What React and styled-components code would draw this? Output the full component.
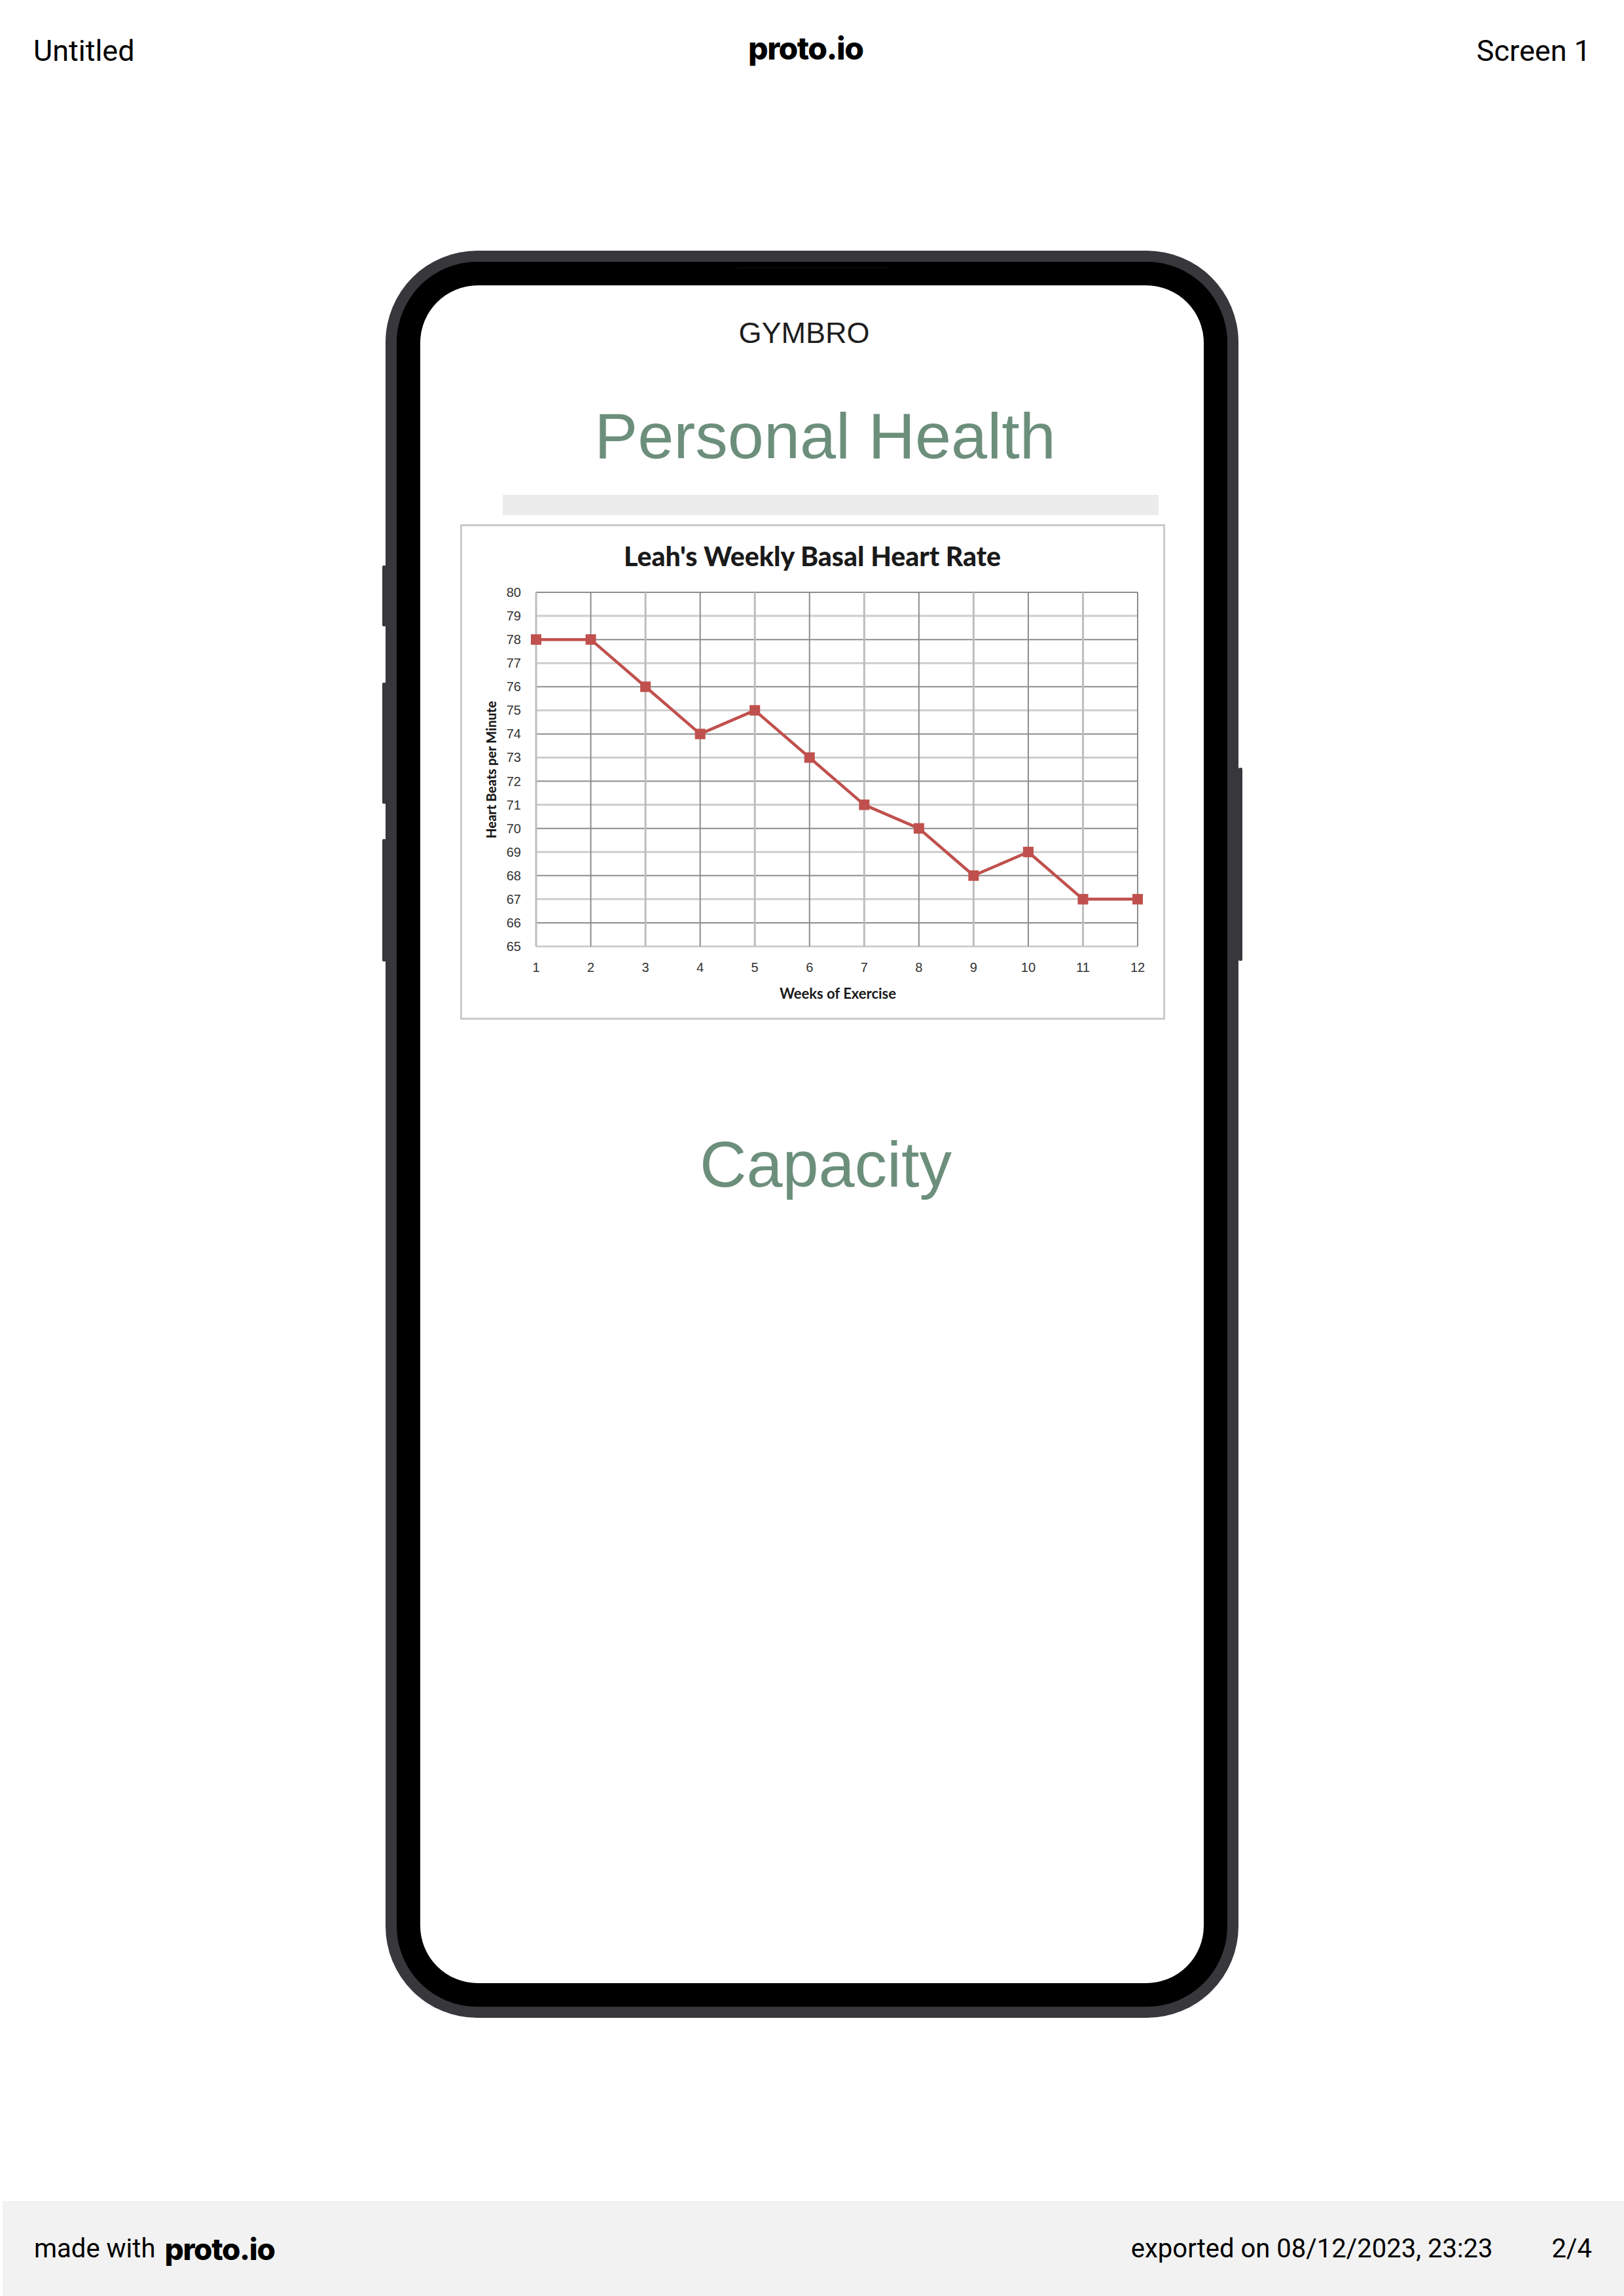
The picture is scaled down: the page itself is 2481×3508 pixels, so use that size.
import React from 'react'
import styled, { createGlobalStyle } from 'styled-components'

const GlobalStyle = createGlobalStyle`
  html, body {
    margin: 0;
    padding: 0;
    background: #fff;
  }
  * {
    box-sizing: border-box;
  }
`

const Page = styled.div`
  width: 2481px;
  min-height: 3508px;
  display: flex;
  flex-direction: column;
  font-family: Roboto, 'Liberation Sans', sans-serif;
  color: #000;
`

const TopBar = styled.header`
  height: 154px;
  padding: 0 51px;
  display: flex;
  align-items: center;
  justify-content: space-between;
  font-size: 45px;
  line-height: 1;
`

const Logo = styled.span`
  font-family: Inter, 'Open Sans', sans-serif;
  font-weight: 800;
  font-size: ${(p) => p.size}px;
  letter-spacing: -0.03em;
  line-height: 1;
  margin-top: ${(p) => p.lift || 0}px;
`

const Stage = styled.main`
  flex: 1;
  display: flex;
  justify-content: center;
  padding-top: 229px;
`

const Phone = styled.div`
  position: relative;
  width: 1303px;
  height: 2700px;
  padding: 17px;
  background: #38373c;
  border-radius: 140px;
`

const SideButton = styled.span`
  position: absolute;
  top: ${(p) => p.top}px;
  height: ${(p) => p.h}px;
  width: 6px;
  background: #38373c;
  border-radius: 2px;
  ${(p) => (p.right ? 'right: -6px;' : 'left: -5px;')}
`

const Bezel = styled.div`
  position: relative;
  height: 100%;
  padding: 36px;
  background: #000;
  border-radius: 123px;
`

const Speaker = styled.span`
  position: absolute;
  top: 8px;
  left: 50%;
  width: 231px;
  height: 2px;
  margin-left: -115px;
  background: #0b0b0b;
  border-radius: 2px;
`

const Screen = styled.div`
  height: 100%;
  background: #fff;
  border-radius: 88px;
  padding-top: 50px;
  display: flex;
  flex-direction: column;
  font-family: 'Liberation Sans', Arial, sans-serif;
  overflow: hidden;
`

const AppName = styled.div`
  font-size: 45px;
  line-height: 1;
  color: #1e1e1e;
  text-align: center;
  padding-right: 24px;
`

const Heading = styled.h1`
  margin: ${(p) => p.top}px 0 0;
  padding-left: ${(p) => p.shift}px;
  font-size: 99px;
  font-weight: 400;
  line-height: 1;
  color: #6c8f7c;
  text-align: center;
`

const GreyStrip = styled.div`
  margin: 41px 0 0 126px;
  width: 1002px;
  height: 31px;
  background: #ececec;
`

const ChartFrame = styled.div`
  margin: 14px 0 0 61px;
  width: 1077px;
  height: 757px;
  border: 3px solid #cacaca;
  background: #fff;
`

const BottomBar = styled.footer`
  height: 145px;
  margin-left: 4px;
  padding: 0 49px 0 48px;
  background: #f2f2f2;
  display: flex;
  align-items: center;
  font-size: 40px;
  line-height: 1;
`

const Made = styled.div`
  display: flex;
  align-items: center;
  gap: 14px;
  flex: 1;
`

const Exported = styled.span`
  margin-right: 90px;
`

const data = [78, 78, 76, 74, 75, 73, 71, 70, 68, 69, 67, 67]

const HeartChart = () => {
  const left = 113
  const right = 1032
  const top = 101
  const bottom = 642
  const xs = (right - left) / 11
  const ys = (bottom - top) / 15
  const pts = data.map((v, i) => [left + i * xs, bottom - (v - 65) * ys])
  const rows = Array.from({ length: 16 }, (_, i) => 65 + i)
  const cols = Array.from({ length: 12 }, (_, i) => i)
  const label = {
    fontFamily: "'Liberation Sans Narrow', 'Liberation Sans', sans-serif",
    fontSize: 20,
    fill: '#333',
  }
  const bold = {
    fontFamily: "Lato, 'Liberation Sans', sans-serif",
    fontWeight: 900,
    fill: '#1a1a1a',
  }

  return (
    <svg width="1071" height="751" viewBox="0 0 1071 751">
      <text x="535" y="61" textAnchor="middle" style={{ ...bold, fontSize: 41 }}>
        Leah's Weekly Basal Heart Rate
      </text>
      {rows.map((v) => {
        const y = bottom - (v - 65) * ys
        const even = v % 2 === 0
        return (
          <g key={v}>
            <line
              x1={left}
              x2={right}
              y1={y}
              y2={y}
              stroke={even ? '#8c8c8c' : '#cdcdcd'}
              strokeWidth={even ? 2 : 3}
            />
            <text x="90" y={y + 7} textAnchor="end" style={label}>
              {v}
            </text>
          </g>
        )
      })}
      {cols.map((i) => {
        const x = left + i * xs
        const dark = i % 2 === 1
        return (
          <g key={i}>
            <line
              x1={x}
              x2={x}
              y1={top}
              y2={bottom}
              stroke={dark ? '#8c8c8c' : '#bdbdbd'}
              strokeWidth={dark ? 2 : 3}
            />
            <text x={x} y="681" textAnchor="middle" style={label}>
              {i + 1}
            </text>
          </g>
        )
      })}
      <polyline
        points={pts.map((p) => p.join(',')).join(' ')}
        fill="none"
        stroke="#c0504d"
        strokeWidth="4.5"
        strokeLinejoin="round"
      />
      {pts.map(([x, y], i) => (
        <rect key={i} x={x - 8} y={y - 8} width="16" height="16" fill="#c0504d" />
      ))}
      <text x="574" y="722" textAnchor="middle" style={{ ...bold, fontWeight: 700, fontSize: 22 }}>
        Weeks of Exercise
      </text>
      <text
        x="0"
        y="0"
        textAnchor="middle"
        transform="translate(52 372) rotate(-90)"
        style={{ ...bold, fontSize: 20 }}
      >
        Heart Beats per Minute
      </text>
    </svg>
  )
}

const App = () => {
  return (
    <Page>
      <GlobalStyle />
      <TopBar>
        <span>Untitled</span>
        <Logo size={48} lift={-6}>
          proto.io
        </Logo>
        <span>Screen 1</span>
      </TopBar>

      <Stage>
        <Phone>
          <SideButton top={481} h={93} />
          <SideButton top={660} h={185} />
          <SideButton top={899} h={187} />
          <SideButton right top={790} h={295} />
          <Bezel>
            <Speaker />
            <Screen>
              <AppName>GYMBRO</AppName>
              <Heading top={85} shift={40}>
                Personal Health
              </Heading>
              <GreyStrip />
              <ChartFrame>
                <HeartChart />
              </ChartFrame>
              <Heading top={171} shift={42}>
                Capacity
              </Heading>
            </Screen>
          </Bezel>
        </Phone>
      </Stage>

      <BottomBar>
        <Made>
          <span>made with</span>
          <Logo size={46}>proto.io</Logo>
        </Made>
        <Exported>exported on 08/12/2023, 23:23</Exported>
        <span>2/4</span>
      </BottomBar>
    </Page>
  )
}

export default App
